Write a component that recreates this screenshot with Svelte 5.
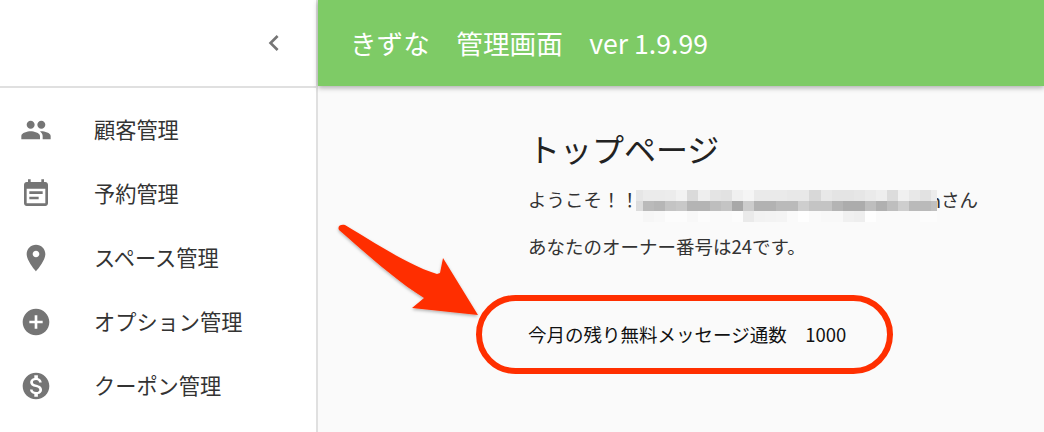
<script>
	const menu = [
		{ label: "顧客管理", icon: "M16 11c1.66 0 2.99-1.34 2.99-3S17.66 5 16 5c-1.66 0-3 1.34-3 3s1.34 3 3 3zm-8 0c1.66 0 2.99-1.34 2.99-3S9.66 5 8 5C6.34 5 5 6.34 5 8s1.34 3 3 3zm0 2c-2.33 0-7 1.17-7 3.5V19h14v-2.5c0-2.33-4.67-3.5-7-3.5zm8 0c-.29 0-.62.02-.97.05 1.16.84 1.97 1.97 1.97 3.45V19h6v-2.5c0-2.33-4.67-3.5-7-3.5z" },
		{ label: "予約管理", icon: "M17 10H7v2h10v-2zm2-7h-1V1h-2v2H8V1H6v2H5c-1.11 0-1.99.9-1.99 2L3 19c0 1.1.89 2 2 2h14c1.1 0 2-.9 2-2V5c0-1.1-.9-2-2-2zm0 16H5V8h14v11zm-5-5H7v2h7v-2z" },
		{ label: "スペース管理", icon: "M12 2C8.13 2 5 5.13 5 9c0 5.25 7 13 7 13s7-7.75 7-13c0-3.87-3.13-7-7-7zm0 9.5c-1.38 0-2.5-1.12-2.5-2.5s1.12-2.5 2.5-2.5 2.5 1.12 2.5 2.5-1.12 2.5-2.5 2.5z" },
		{ label: "オプション管理", icon: "M12 2C6.48 2 2 6.48 2 12s4.48 10 10 10 10-4.48 10-10S17.52 2 12 2zm5 11h-4v4h-2v-4H7v-2h4V7h2v4h4v2z" },
		{ label: "クーポン管理", icon: "M12 2C6.48 2 2 6.48 2 12s4.48 10 10 10 10-4.48 10-10S17.52 2 12 2zm1.41 16.09V20h-2.67v-1.93c-1.71-.36-3.16-1.46-3.27-3.4h1.96c.1 1.05.82 1.87 2.65 1.87 1.96 0 2.4-.98 2.4-1.59 0-.83-.44-1.61-2.67-2.14-2.48-.6-4.18-1.62-4.18-3.67 0-1.72 1.39-2.84 3.11-3.21V4h2.67v1.95c1.86.45 2.79 1.86 2.85 3.39H14.3c-.05-1.11-.64-1.87-2.22-1.87-1.5 0-2.4.68-2.4 1.64 0 .84.65 1.39 2.67 1.91s4.18 1.39 4.18 3.91c-.01 1.83-1.38 2.83-3.12 3.16z" }
	];

	// mosaic over the hidden name, grey level per cell
	const mosaic = [
		[230,235,235,236,242,218,238,228,226,240,245,234,234,234,232,232,216,232,228,228,230,234,238,220,240,232,226,236],
		[220,186,182,196,200,180,180,190,196,168,204,178,178,186,186,206,196,196,180,172,172,190,176,190,206,186,186,192],
		[250,246,248,252,252,248,252,250,250,252,234,242,243,244,250,254,250,248,248,240,238,254,250,250,250,250,252,252]
	];
</script>

<div class="page">
	<aside class="drawer">
		<div class="toggle">
			<svg viewBox="0 0 24 24" width="32" height="32"><path d="M15.41 7.41L14 6l-6 6 6 6 1.41-1.41L10.83 12z" /></svg>
		</div>
		<ul>
			{#each menu as item}
				<li>
					<svg viewBox="0 0 24 24" width="32" height="32"><path d={item.icon} /></svg>
					<span>{item.label}</span>
				</li>
			{/each}
		</ul>
	</aside>

	<div class="right">
		<header>きずな　管理画面　ver 1.9.99</header>
		<main>
			<h1>トップページ</h1>
			<p class="welcome">ようこそ！！<span class="name">
				<span class="tail">n</span>
				<span class="mosaic">
					{#each mosaic as row}
						<span class="row">
							{#each row as g}
								<span style="background: rgb({g},{g},{g})"></span>
							{/each}
						</span>
					{/each}
				</span>
			</span>さん</p>
			<p class="owner">あなたのオーナー番号は24です。</p>
			<p class="count">今月の残り無料メッセージ通数　1000</p>
		</main>
	</div>

	<svg class="markup" viewBox="0 0 1044 432" width="1044" height="432">
		<defs>
			<filter id="soft" x="-10%" y="-10%" width="120%" height="130%">
				<feDropShadow dx="0" dy="1.5" stdDeviation="1.5" flood-color="#000" flood-opacity="0.3" />
			</filter>
		</defs>
		<path filter="url(#soft)" fill="#ff2f00" d="M339 230 C337 226 341 224 345 225 C375 243 410 266 437 274 L440 273 L443 258 L478 315 L412 308 L424 298 C395 280 362 250 339 230 Z" />
		<rect x="479" y="298" width="411" height="73" rx="36.5" fill="none" stroke="#ff2f00" stroke-width="6" />
	</svg>
</div>

<style>
	:global(body) {
		margin: 0;
		overflow: hidden;
		font-family: "Noto Sans CJK JP", "Noto Sans", sans-serif;
	}

	.page {
		position: relative;
		display: flex;
		width: 1044px;
		height: 432px;
		background: #fafafa;
		overflow: hidden;
	}

	.drawer {
		width: 316px;
		flex-shrink: 0;
		background: #fff;
		border-right: 2px solid #e0e0e0;
	}

	.toggle {
		display: flex;
		justify-content: flex-end;
		align-items: center;
		height: 86px;
		padding-right: 26px;
		border-bottom: 2px solid #e0e0e0;
	}

	.toggle svg {
		fill: #757575;
	}

	ul {
		list-style: none;
		margin: 0;
		padding: 10px 0 0 20px;
	}

	li {
		display: flex;
		align-items: center;
		height: 64px;
		color: #333;
		font-size: 21.2px;
	}

	li span {
		margin-bottom: 4px;
	}

	li svg {
		fill: #757575;
		margin-right: 42px;
	}

	.right {
		flex: 1;
		min-width: 0;
	}

	header {
		height: 86px;
		box-sizing: border-box;
		padding: 0 0 0 32px;
		line-height: 86px;
		background: #7ecb66;
		color: #fff;
		font-size: 26.6px;
		box-shadow: 0 2px 5px rgba(0, 0, 0, 0.3);
	}

	main {
		padding: 38px 0 0 210px;
	}

	h1 {
		margin: 0;
		font-size: 32px;
		font-weight: 400;
		line-height: 48px;
		color: #222;
	}

	p {
		margin: 0;
		font-size: 18.5px;
		line-height: 32px;
		color: #333;
	}

	.welcome {
		margin-top: 11px;
		white-space: nowrap;
	}

	.name {
		position: relative;
		display: inline-block;
		width: 302px;
		height: 24px;
		vertical-align: -5px;
	}

	.tail {
		position: absolute;
		right: 0;
		top: -4px;
	}

	.mosaic {
		position: absolute;
		left: -3px;
		top: 2px;
		display: flex;
		flex-direction: column;
	}

	.owner {
		margin-top: 15px;
	}

	.count {
		margin-top: 56px;
		color: #111;
	}

	.row {
		display: flex;
		height: 10.5px;
		width: 301px;
		overflow: hidden;
	}

	.row span {
		flex: none;
		width: 11.1px;
	}

	.row span:first-child {
		width: 7px;
	}

	.markup {
		position: absolute;
		inset: 0;
		pointer-events: none;
	}
</style>
